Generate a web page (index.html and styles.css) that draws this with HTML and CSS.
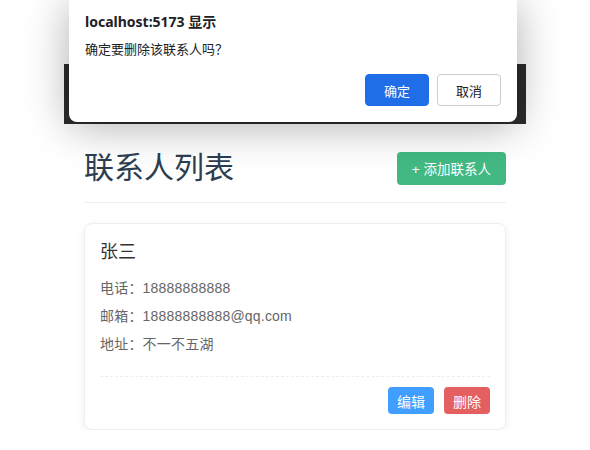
FILE: index.html
```html
<!DOCTYPE html>
<html lang="zh-CN">
<head>
    <meta charset="UTF-8">
    <meta name="viewport" content="width=device-width, initial-scale=1.0">
    <title>联系人列表</title>
    <link rel="stylesheet" href="styles.css">
</head>
<body>
    <div id="app" class="app">
        <div class="navbar"></div>

        <div class="page">
            <div class="page-header">
                <h1>联系人列表</h1>
                <button class="btn-add">+ 添加联系人</button>
            </div>

            <div class="contact-card">
                <h3 class="contact-name">张三</h3>
                <p>电话：18888888888</p>
                <p>邮箱：18888888888@qq.com</p>
                <p>地址：不一不五湖</p>
                <div class="card-actions">
                    <button class="btn-edit">编辑</button>
                    <button class="btn-delete">删除</button>
                </div>
            </div>
        </div>
    </div>

    <div class="confirm-dialog">
        <div class="confirm-title">localhost:5173 显示</div>
        <div class="confirm-message">确定要删除该联系人吗？</div>
        <div class="confirm-buttons">
            <button class="btn-ok">确定</button>
            <button class="btn-cancel">取消</button>
        </div>
    </div>
</body>
</html>
```

FILE: styles.css
```css
body {
    font-family: 'Liberation Sans', 'Noto Sans CJK SC', sans-serif;
    margin: 0;
    padding: 0;
    background: #fff;
    color: #333;
}

.app {
    width: 462px;
    margin: 0 auto;
    padding-top: 64px;
}

.navbar {
    height: 60px;
    background-color: #2c2c2c;
}

.page {
    padding: 0 20px;
}

.page-header {
    display: flex;
    justify-content: space-between;
    align-items: center;
    margin-top: 24px;
    padding-bottom: 14px;
    border-bottom: 1px solid #eee;
}

.page-header h1 {
    margin: 0;
    font-size: 30px;
    font-weight: normal;
    line-height: 40px;
    color: #2c3e50;
}

.btn-add {
    height: 33px;
    padding: 0 15px;
    background-color: #42b983;
    color: #fff;
    border: none;
    border-radius: 4px;
    font-family: inherit;
    font-size: 13.5px;
    cursor: pointer;
}

.contact-card {
    margin-top: 20px;
    padding: 15px;
    border: 1px solid #ebeef5;
    border-radius: 8px;
    box-shadow: 0 2px 8px rgba(0, 0, 0, 0.07);
}

.contact-name {
    margin: 0 0 8px 0;
    font-size: 18px;
    font-weight: normal;
    line-height: 27px;
    color: #333;
}

.contact-card p {
    margin: 0;
    font-size: 14px;
    line-height: 28px;
    color: #666;
}

.contact-card p {
    letter-spacing: 0.2px;
}

.card-actions {
    display: flex;
    justify-content: flex-end;
    gap: 10px;
    margin-top: 18px;
    padding-top: 10px;
    border-top: 1px dashed #eee;
}

.card-actions button {
    height: 27px;
    padding: 0 9px;
    border: none;
    border-radius: 4px;
    color: #fff;
    font-family: inherit;
    font-size: 14px;
    cursor: pointer;
}

.btn-edit {
    background-color: #409eff;
}

.btn-delete {
    background-color: #e45f5f;
}

/* browser confirm() box */
.confirm-dialog {
    position: absolute;
    top: 0;
    left: 69px;
    width: 416px;
    padding: 12px 16px 16px 16px;
    background: #fff;
    border-radius: 0 0 8px 8px;
    box-shadow: 0 4px 44px rgba(0, 0, 0, 0.32);
    font-family: 'Noto Sans', 'Noto Sans CJK SC', sans-serif;
    color: #202124;
}

.confirm-title {
    font-size: 14px;
    font-weight: bold;
    line-height: 20px;
}

.confirm-message {
    margin-top: 7px;
    font-size: 13px;
    line-height: 20px;
}

.confirm-buttons {
    display: flex;
    justify-content: flex-end;
    gap: 8px;
    margin-top: 15px;
}

.confirm-buttons button {
    width: 64px;
    height: 32px;
    border-radius: 4px;
    font-family: inherit;
    font-size: 13px;
    cursor: pointer;
}

.btn-ok {
    background-color: #1f6ee8;
    border: 1px solid #1f6ee8;
    color: #fff;
}

.btn-cancel {
    background-color: #fff;
    border: 1px solid #ccc;
    color: #202124;
}
```
